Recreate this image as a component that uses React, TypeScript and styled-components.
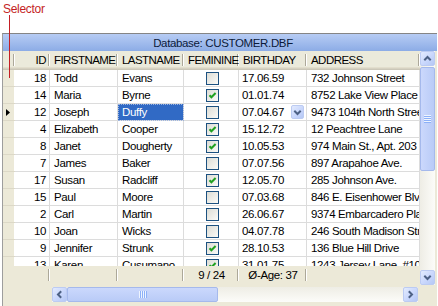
import React from "react"
import styled, { createGlobalStyle } from "styled-components"

const GlobalStyle = createGlobalStyle`
    html, body {
        margin: 0;
        padding: 0;
        background: #fff;
    }
    body {
        font-family: "Liberation Sans", Arial, sans-serif;
        font-size: 11.5px;
        letter-spacing: -0.35px;
        color: #000;
    }
`

type Customer = {
    id: number
    first: string
    last: string
    feminine: boolean
    birthday: string
    address: string
}

const customers: Customer[] = [
    { id: 18, first: "Todd", last: "Evans", feminine: false, birthday: "17.06.59", address: "732 Johnson Street" },
    { id: 14, first: "Maria", last: "Byrne", feminine: true, birthday: "01.01.74", address: "8752 Lake View Place" },
    { id: 12, first: "Joseph", last: "Duffy", feminine: false, birthday: "07.04.67", address: "9473 104th North Street" },
    { id: 4, first: "Elizabeth", last: "Cooper", feminine: true, birthday: "15.12.72", address: "12 Peachtree Lane" },
    { id: 8, first: "Janet", last: "Dougherty", feminine: true, birthday: "10.05.53", address: "974 Main St., Apt. 203" },
    { id: 7, first: "James", last: "Baker", feminine: false, birthday: "07.07.56", address: "897 Arapahoe Ave." },
    { id: 17, first: "Susan", last: "Radcliff", feminine: true, birthday: "12.05.70", address: "285 Johnson Ave." },
    { id: 15, first: "Paul", last: "Moore", feminine: false, birthday: "07.03.68", address: "846 E. Eisenhower Blvd." },
    { id: 2, first: "Carl", last: "Martin", feminine: false, birthday: "26.06.67", address: "9374 Embarcadero Place" },
    { id: 10, first: "Joan", last: "Wicks", feminine: false, birthday: "04.07.78", address: "246 South Madison Street" },
    { id: 9, first: "Jennifer", last: "Strunk", feminine: true, birthday: "28.10.53", address: "136 Blue Hill Drive" },
    { id: 13, first: "Karen", last: "Cusumano", feminine: true, birthday: "31.01.75", address: "1243 Jersey Lane, #10" }
]

const CURRENT_ID = 12
const TOTAL = 24

// indicator, ID, FIRSTNAME, LASTNAME, FEMININE, BIRTHDAY, ADDRESS
const COLUMNS = "12px 35px 68px 66px 55px 68px 113px"

const SEPARATOR = `
    linear-gradient(#aca899, #aca899) right 1px top 3px / 1px calc(100% - 7px) no-repeat,
    linear-gradient(#fff, #fff) right 0 top 3px / 1px calc(100% - 7px) no-repeat
`

const Page = styled.div`
    position: relative;
    width: 438px;
    height: 306px;
    display: flex;
    flex-direction: column;
    overflow: hidden;
`

const Annotation = styled.div`
    height: 33px;
    box-sizing: border-box;
    padding: 2px 0 0 3px;
    color: #c41e24;
    font-size: 12px;
    letter-spacing: -0.3px;
`

const AnnotationLine = styled.div`
    position: absolute;
    left: 9px;
    top: 15px;
    width: 1px;
    height: 63px;
    background: #c41e24;
    z-index: 2;
`

const Frame = styled.div`
    margin-left: 2px;
    width: 435px;
    flex: 1;
    box-sizing: border-box;
    border-top: 1px solid #858585;
    border-left: 1px solid #9d9d9d;
    background: #ece9d8;
    display: flex;
    flex-direction: column;
`

const TitleBar = styled.div`
    height: 17px;
    display: flex;
    align-items: center;
    justify-content: center;
    padding-left: 6px;
    background: linear-gradient(to bottom, #b7ccf4, #8cace6);
    color: #0b1a3a;
    white-space: nowrap;
`

const Body = styled.div`
    display: flex;
    padding-right: 2px;
`

const GridArea = styled.div`
    width: 417px;
    display: flex;
    flex-direction: column;
`

const HeaderRow = styled.div`
    display: grid;
    grid-template-columns: ${COLUMNS};
    height: 19px;
    background: #ebeadb;
    box-shadow: inset 0 -1px #cbc7b8, inset 0 -2px #d6d2c2, inset 0 -3px #e2decd;
`

const HeaderCell = styled.div<{ $align?: "left" | "right" }>`
    display: flex;
    align-items: center;
    justify-content: ${p => (p.$align === "right" ? "flex-end" : "flex-start")};
    padding: 0 ${p => (p.$align === "right" ? "4px" : "2px")} 1px 4px;
    letter-spacing: -0.55px;
    white-space: nowrap;
    overflow: hidden;
    background: ${SEPARATOR};
`

const Rows = styled.div`
    height: 196px;
    overflow: hidden;
    background: #fff;
`

const Row = styled.div`
    display: grid;
    grid-template-columns: ${COLUMNS};
    height: 17px;
`

const Indicator = styled.div`
    background: #ece9d8;
    box-shadow: inset 0 -1px #dcd8c7, inset -1px 0 #fff;
    display: flex;
    align-items: center;
    padding-left: 3px;
`

const Cell = styled.div<{ $align?: "left" | "right" | "center"; $selected?: boolean }>`
    box-sizing: border-box;
    display: flex;
    align-items: center;
    justify-content: ${p =>
        p.$align === "right" ? "flex-end" : p.$align === "center" ? "center" : "flex-start"};
    padding: 0 ${p => (p.$align === "right" ? "3px" : "2px")} 0 4px;
    border-right: 1px solid #dcdcdc;
    border-bottom: 1px solid #dcdcdc;
    white-space: nowrap;
    overflow: hidden;
    background: ${p => (p.$selected ? "#316ac5" : "transparent")};
    color: ${p => (p.$selected ? "#fff" : "#000")};
    outline: ${p => (p.$selected ? "1px dotted #9fb6e0" : "none")};
    outline-offset: -1px;
`

const DateCell = styled(Cell)`
    justify-content: space-between;
    padding-left: 3px;
    padding-right: 2px;
`

const Box = styled.span`
    width: 13px;
    height: 13px;
    box-sizing: border-box;
    border: 1px solid #1c5180;
    background: linear-gradient(135deg, #dcdcd5, #fbfbf8);
    display: flex;
    align-items: center;
    justify-content: center;
`

const Footer = styled.div`
    display: grid;
    grid-template-columns: ${COLUMNS};
    height: 19px;
    background: #ece9d8;
`

const FooterCell = styled.div<{ $sep?: boolean }>`
    display: flex;
    align-items: center;
    justify-content: center;
    white-space: nowrap;
    padding-bottom: 1px;
    background: ${p => (p.$sep ? SEPARATOR : "none")};
`

const ScrollButton = styled.div<{ $w: number; $h: number }>`
    width: ${p => p.$w}px;
    height: ${p => p.$h}px;
    flex: none;
    box-sizing: border-box;
    border: 1px solid #bccbf2;
    border-radius: 2px;
    background: linear-gradient(135deg, #e3ebfe 0%, #c9d7fc 55%, #b5c8f5 100%);
    display: flex;
    align-items: center;
    justify-content: center;
`

const VScroll = styled.div`
    width: 15px;
    height: 234px;
    display: flex;
    flex-direction: column;
    background: linear-gradient(to right, #eeede5, #fcfcf9);
`

const HScrollRow = styled.div`
    display: flex;
    padding: 2px 0 0 49px;
`

const HScroll = styled.div`
    width: 366px;
    height: 15px;
    display: flex;
    background: linear-gradient(to bottom, #eeede5, #fcfcf9);
`

const Thumb = styled.div<{ $vertical?: boolean; $size: number }>`
    ${p => (p.$vertical ? `height: ${p.$size}px;` : `width: ${p.$size}px;`)}
    flex: none;
    box-sizing: border-box;
    border: 1px solid #a5b9ec;
    border-radius: 2px;
    background: ${p =>
        p.$vertical
            ? "linear-gradient(to right, #cbd8fc, #b9cbf7)"
            : "linear-gradient(to bottom, #cbd8fc, #b9cbf7)"};
    display: flex;
    align-items: center;
    justify-content: center;
    margin: ${p => (p.$vertical ? "1px 0 0" : "0")};
`

const Grip = styled.div<{ $vertical?: boolean }>`
    width: ${p => (p.$vertical ? 7 : 8)}px;
    height: ${p => (p.$vertical ? 8 : 7)}px;
    background: repeating-linear-gradient(
        ${p => (p.$vertical ? "to bottom" : "to right")},
        #eef4fe 0 1px,
        #8cb0f8 1px 2px
    );
`

const Track = styled.div`
    flex: 1;
`

const Chevron = ({ rotate }: { rotate: number }) => (
    <svg width={9} height={7} viewBox="0 0 9 7" style={{ transform: `rotate(${rotate}deg)` }}>
        <path d="M1.3 5.2 L4.5 2 L7.7 5.2" fill="none" stroke="#4d6185" strokeWidth={2} />
    </svg>
)

const Check = () => (
    <svg width={11} height={11} viewBox="0 0 11 11">
        <path d="M2.5 5.2 L4.4 7.2 L8.6 3" fill="none" stroke="#21a121" strokeWidth={2} />
    </svg>
)

const Pointer = () => (
    <svg width={4} height={7} viewBox="0 0 4 7">
        <polygon points="0,0 4,3.5 0,7" fill="#000" />
    </svg>
)

const GridRow = ({ c }: { c: Customer }) => {
    const current = c.id === CURRENT_ID
    return (
        <Row>
            <Indicator>{current && <Pointer />}</Indicator>
            <Cell $align="right">{c.id}</Cell>
            <Cell>{c.first}</Cell>
            <Cell $selected={current}>{c.last}</Cell>
            <Cell $align="center">
                <Box>{c.feminine && <Check />}</Box>
            </Cell>
            <DateCell>
                {c.birthday}
                {current && (
                    <ScrollButton $w={13} $h={14}>
                        <Chevron rotate={180} />
                    </ScrollButton>
                )}
            </DateCell>
            <Cell>{c.address}</Cell>
        </Row>
    )
}

export default function App() {
    return (
        <Page>
            <GlobalStyle />
            <Annotation>Selector</Annotation>
            <AnnotationLine />
            <Frame>
                <TitleBar>Database: CUSTOMER.DBF</TitleBar>
                <Body>
                    <GridArea>
                        <HeaderRow>
                            <HeaderCell />
                            <HeaderCell $align="right">ID</HeaderCell>
                            <HeaderCell>FIRSTNAME</HeaderCell>
                            <HeaderCell>LASTNAME</HeaderCell>
                            <HeaderCell>FEMININE</HeaderCell>
                            <HeaderCell>BIRTHDAY</HeaderCell>
                            <HeaderCell>ADDRESS</HeaderCell>
                        </HeaderRow>
                        <Rows>
                            {customers.map(c => (
                                <GridRow key={c.id} c={c} />
                            ))}
                        </Rows>
                        <Footer>
                            <FooterCell />
                            <FooterCell $sep />
                            <FooterCell $sep />
                            <FooterCell $sep />
                            <FooterCell $sep>9 / {TOTAL}</FooterCell>
                            <FooterCell $sep>Ø-Age: 37</FooterCell>
                            <FooterCell />
                        </Footer>
                    </GridArea>
                    <VScroll>
                        <ScrollButton $w={15} $h={15}>
                            <Chevron rotate={0} />
                        </ScrollButton>
                        <Thumb $vertical $size={104}>
                            <Grip $vertical />
                        </Thumb>
                        <Track />
                        <ScrollButton $w={15} $h={15}>
                            <Chevron rotate={180} />
                        </ScrollButton>
                    </VScroll>
                </Body>
                <HScrollRow>
                    <HScroll>
                        <ScrollButton $w={15} $h={15}>
                            <Chevron rotate={-90} />
                        </ScrollButton>
                        <Thumb $size={151}>
                            <Grip />
                        </Thumb>
                        <Track />
                        <ScrollButton $w={15} $h={15}>
                            <Chevron rotate={90} />
                        </ScrollButton>
                    </HScroll>
                </HScrollRow>
            </Frame>
        </Page>
    )
}
